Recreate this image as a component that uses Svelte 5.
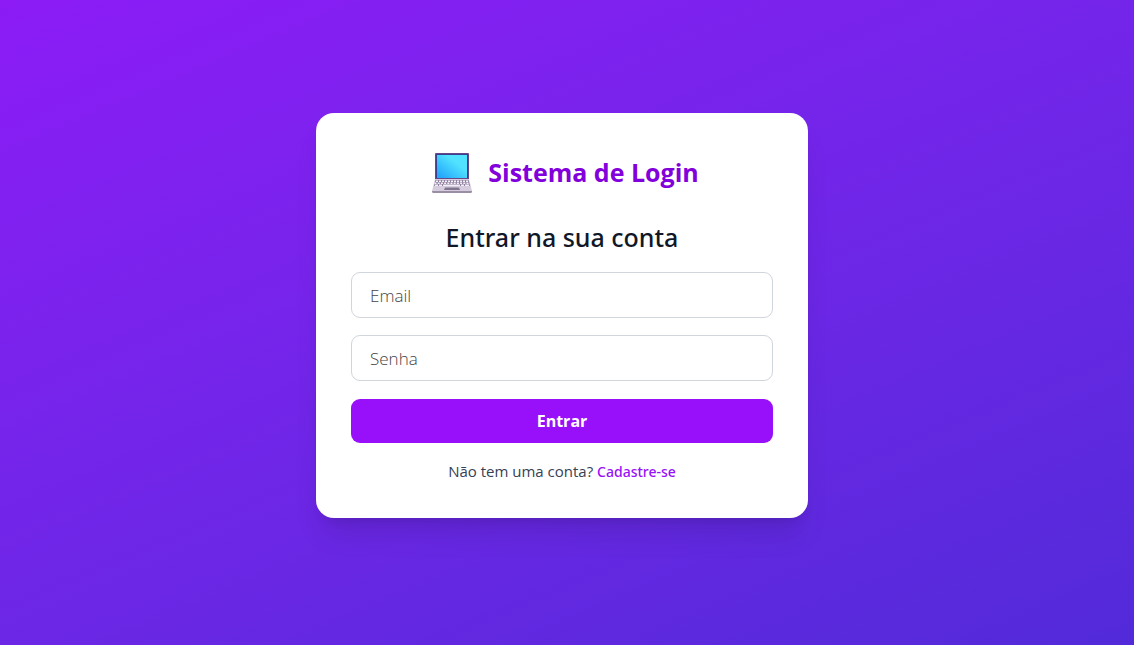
<script>
  let email = $state('');
  let password = $state('');

  const keys = [0, 1, 2, 3, 4, 5, 6, 7, 8, 9, 10];
</script>

<svelte:head>
  <title>Sistema de Login</title>
</svelte:head>

<main class="page">
  <section class="card">
    <header class="brand">
      <svg class="logo" viewBox="0 0 40 40" aria-hidden="true">
        <defs>
          <linearGradient id="screen" x1="0" y1="1" x2="1" y2="0">
            <stop offset="0.1" stop-color="#26a9fb" />
            <stop offset="0.65" stop-color="#50e2ff" />
          </linearGradient>
        </defs>
        <rect x="3" y="0" width="34" height="27" rx="1" fill="#66488a" />
        <rect x="4" y="1" width="32" height="24" fill="#3c3f8c" />
        <rect x="5" y="2" width="30" height="23" fill="url(#screen)" />
        <path d="M3 26h34l3 12H0z" fill="#d5cddd" />
        <path d="M0 38h40v.5q0 1.500-1.500 1.500h-37Q0 40 0 38.500z" fill="#998ea4" />
        <path d="M3.500 27h33l1.500 6H2z" fill="#8f819f" />
        {#each keys as k}
          <rect x={4 + k * 3} y="27.500" width="2" height="1.500" fill="#f3eef8" />
          <rect x={2.500 + k * 3.200} y="29.500" width="2" height="1.500" fill="#f3eef8" />
        {/each}
        <path d="M3 31.500h3v1.500H3zM7 31.500h3v1.500H7zM11 31.500h17v1.500H11zM29 31.500h3v1.500h-3zM33 31.500h4v1.500h-4z" fill="#f3eef8" />
        <path d="M13 34.500h14l1 2.500H12z" fill="#82758f" />
      </svg>
      <h1>Sistema de Login</h1>
    </header>

    <h2>Entrar na sua conta</h2>

    <form onsubmit={(event) => event.preventDefault()}>
      <input type="email" placeholder="Email" aria-label="Email" bind:value={email} />
      <input type="password" placeholder="Senha" aria-label="Senha" bind:value={password} />
      <button type="submit">Entrar</button>
    </form>

    <p>Não tem uma conta? <a href="#cadastro">Cadastre-se</a></p>
  </section>
</main>

<style>
  :global(body) {
    margin: 0;
  }

  .page {
    box-sizing: border-box;
    min-height: 100vh;
    padding: 0 10px 14px 0;
    display: flex;
    align-items: center;
    justify-content: center;
    font-family: 'Segoe UI', 'Open Sans', 'Noto Sans', sans-serif;
    background: linear-gradient(157deg in oklab, #8c1bf6, #522ad9);
  }

  .card {
    box-sizing: border-box;
    width: 100%;
    max-width: 492px;
    padding: 35px;
    border-radius: 18px;
    background: #fff;
    box-shadow: 0 22px 28px -6px rgb(0 0 0 / 0.1), 0 9px 11px -7px rgb(0 0 0 / 0.1);
    text-align: center;
  }

  .brand {
    display: flex;
    align-items: center;
    justify-content: center;
    gap: 16px;
    height: 50px;
    margin-bottom: 21px;
    padding-left: 7px;
  }

  .logo {
    width: 40px;
    height: 40px;
  }

  h1,
  h2,
  p {
    margin: 0;
  }

  h1 {
    padding-bottom: 2px;
    font-size: 25px;
    line-height: 36px;
    font-weight: 700;
    color: #8200db;
  }

  h2 {
    margin-bottom: 17px;
    font-family: 'Segoe UI', 'Noto Sans', sans-serif;
    font-size: 25px;
    line-height: 36px;
    font-weight: 500;
    color: #101828;
  }

  form {
    display: grid;
    gap: 17px;
    margin-bottom: 17px;
  }

  input,
  button {
    box-sizing: border-box;
    width: 100%;
    border-radius: 9px;
    font-family: inherit;
    line-height: 26px;
  }

  input {
    height: 46px;
    padding: 0 18px;
    border: 1px solid #d1d5dc;
    background: #fff;
    color: #101828;
    font-size: 17px;
    font-weight: 300;
  }

  input::placeholder {
    color: #444;
    opacity: 1;
  }

  button {
    height: 44px;
    margin-top: 1px;
    border: 0;
    background: #9810fa;
    color: #fff;
    font-size: 16px;
    font-weight: 700;
    cursor: pointer;
  }

  p {
    font-size: 15px;
    line-height: 22px;
    color: #364153;
  }

  a {
    color: #9810fa;
    font-family: 'Segoe UI', 'Noto Sans', sans-serif;
    font-size: 14px;
    font-weight: 500;
    text-decoration: none;
  }
</style>
